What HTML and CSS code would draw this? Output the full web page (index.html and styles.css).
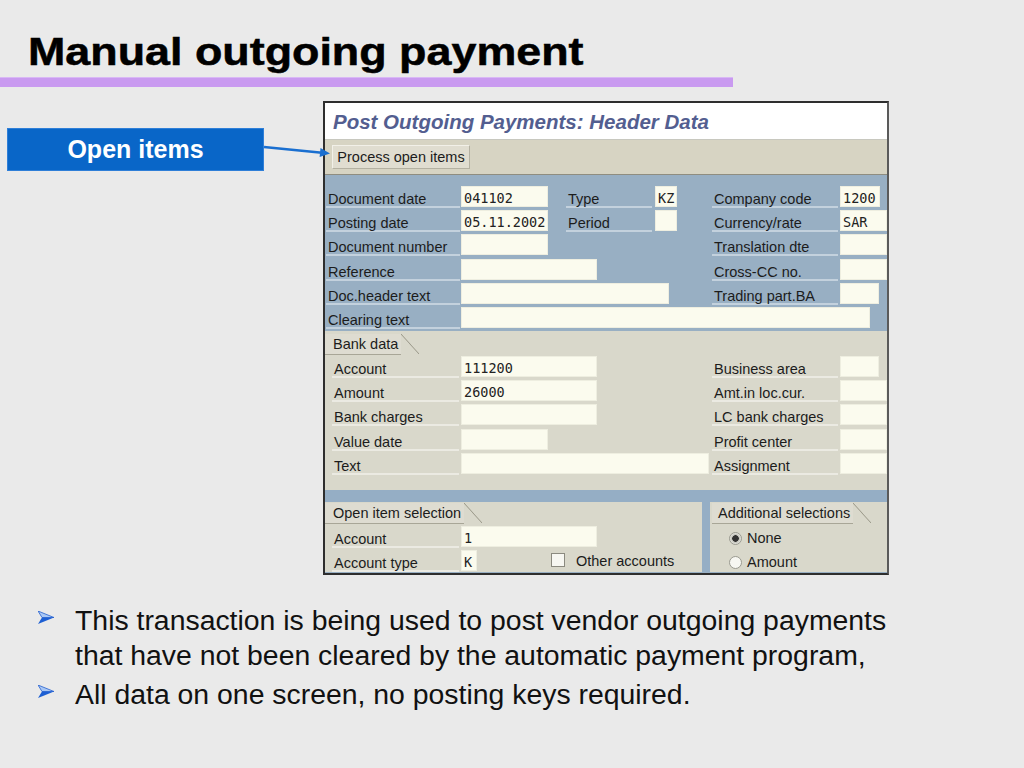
FILE: index.html
```html
<!DOCTYPE html>
<html lang="en">

<head>
    <meta charset="UTF-8">
    <meta name="viewport" content="width=device-width, initial-scale=1.0">
    <title>Manual outgoing payment</title>
    <link rel="stylesheet" href="styles.css">
</head>

<body>

    <!-- Slide title -->
    <header class="slide-head">
        <h1><span>Manual outgoing payment</span></h1>
        <div class="rule"></div>
    </header>

    <main class="stage">
        <div class="callout">Open items</div>

        <svg class="pointer" width="72" height="20" viewBox="0 0 72 20">
            <line x1="2" y1="6" x2="60" y2="11.7" stroke="#1a6fd0" stroke-width="2.5" />
            <polygon points="68,12.5 57.6,16 58.5,7" fill="#1a6fd0" />
        </svg>

        <!-- SAP screen -->
        <div class="sap">
            <div class="sap-title">Post Outgoing Payments: Header Data</div>
            <div class="sap-toolbar">
                <button class="sap-btn">Process open items</button>
            </div>

            <div class="sec-blue">
                <div class="row">
                    <div class="lbl">Document date</div>
                    <div class="fld fld-date">041102</div>
                    <div class="mid">
                        <div class="lbl lbl-mid">Type</div>
                        <div class="fld fld-tiny">KZ</div>
                    </div>
                    <div class="rgrp">
                        <div class="lbl">Company code</div>
                        <div class="fld fld-cc">1200</div>
                    </div>
                </div>
                <div class="row">
                    <div class="lbl">Posting date</div>
                    <div class="fld fld-date">05.11.2002</div>
                    <div class="mid">
                        <div class="lbl lbl-mid">Period</div>
                        <div class="fld fld-tiny"></div>
                    </div>
                    <div class="rgrp">
                        <div class="lbl">Currency/rate</div>
                        <div class="fld fld-end">SAR</div>
                    </div>
                </div>
                <div class="row">
                    <div class="lbl">Document number</div>
                    <div class="fld fld-date"></div>
                    <div class="rgrp">
                        <div class="lbl">Translation dte</div>
                        <div class="fld fld-end"></div>
                    </div>
                </div>
                <div class="row">
                    <div class="lbl">Reference</div>
                    <div class="fld fld-mid"></div>
                    <div class="rgrp">
                        <div class="lbl">Cross-CC no.</div>
                        <div class="fld fld-end"></div>
                    </div>
                </div>
                <div class="row">
                    <div class="lbl">Doc.header text</div>
                    <div class="fld fld-hdr"></div>
                    <div class="rgrp">
                        <div class="lbl">Trading part.BA</div>
                        <div class="fld fld-ba"></div>
                    </div>
                </div>
                <div class="row">
                    <div class="lbl">Clearing text</div>
                    <div class="fld fld-clear"></div>
                </div>
            </div>

            <div class="sec-beige bank">
                <div class="tab">Bank data</div>
                <div class="row">
                    <div class="lbl">Account</div>
                    <div class="fld fld-mid">111200</div>
                    <div class="rgrp">
                        <div class="lbl">Business area</div>
                        <div class="fld fld-ba"></div>
                    </div>
                </div>
                <div class="row">
                    <div class="lbl">Amount</div>
                    <div class="fld fld-mid">26000</div>
                    <div class="rgrp">
                        <div class="lbl">Amt.in loc.cur.</div>
                        <div class="fld fld-end"></div>
                    </div>
                </div>
                <div class="row">
                    <div class="lbl">Bank charges</div>
                    <div class="fld fld-mid"></div>
                    <div class="rgrp">
                        <div class="lbl">LC bank charges</div>
                        <div class="fld fld-end"></div>
                    </div>
                </div>
                <div class="row">
                    <div class="lbl">Value date</div>
                    <div class="fld fld-date"></div>
                    <div class="rgrp">
                        <div class="lbl">Profit center</div>
                        <div class="fld fld-end"></div>
                    </div>
                </div>
                <div class="row">
                    <div class="lbl">Text</div>
                    <div class="fld fld-text"></div>
                    <div class="rgrp">
                        <div class="lbl">Assignment</div>
                        <div class="fld fld-end"></div>
                    </div>
                </div>
            </div>

            <div class="band"></div>

            <div class="sap-bottom">
                <div class="sec-beige box-open">
                    <div class="tab">Open item selection</div>
                    <div class="row">
                        <div class="lbl">Account</div>
                        <div class="fld fld-mid">1</div>
                    </div>
                    <div class="row">
                        <div class="lbl">Account type</div>
                        <div class="fld fld-k">K</div>
                        <span class="check"></span>
                        <span class="opt-text">Other accounts</span>
                    </div>
                </div>
                <div class="sec-beige box-add">
                    <div class="tab">Additional selections</div>
                    <div class="radio-row">
                        <span class="radio on"></span>
                        <span class="opt-text">None</span>
                    </div>
                    <div class="radio-row">
                        <span class="radio"></span>
                        <span class="opt-text">Amount</span>
                    </div>
                </div>
            </div>
        </div>
    </main>

    <ul class="bullets">
        <li>
            <svg class="marker" width="16" height="13" viewBox="0 0 16 13">
                <polygon points="0,0 16,6.5 4,6.5" fill="#a9c7f4" stroke="#2560cf" stroke-width="0.8" />
                <polygon points="4,6.5 16,6.5 0,13" fill="#1d5fd3" />
            </svg>
            <span>This transaction is being used to post vendor outgoing payments that have not been cleared by the
                automatic payment program,</span>
        </li>
        <li>
            <svg class="marker" width="16" height="13" viewBox="0 0 16 13">
                <polygon points="0,0 16,6.5 4,6.5" fill="#a9c7f4" stroke="#2560cf" stroke-width="0.8" />
                <polygon points="4,6.5 16,6.5 0,13" fill="#1d5fd3" />
            </svg>
            <span>All data on one screen, no posting keys required.</span>
        </li>
    </ul>

</body>

</html>
```

FILE: styles.css
```css
body {
    margin: 0;
    background-color: #eaeaea;
    font-family: "Liberation Sans", Arial, sans-serif;
    color: #111;
    overflow: hidden;
}

/* title */
.slide-head {
    padding-top: 33px;
}

h1 {
    margin: 0;
    padding-left: 28px;
    font-size: 38px;
    line-height: 38px;
    font-weight: bold;
    color: #000;
}

h1 span {
    display: inline-block;
    transform: scaleX(1.18);
    transform-origin: left center;
    -webkit-text-stroke: 0.5px #000;
}

.rule {
    margin-top: 6px;
    width: 733px;
    height: 10px;
    background: #c99af0;
    border-top: 1px solid #d9b8f5;
    box-sizing: border-box;
}

/* stage with callout + screen */
.stage {
    position: relative;
    display: flex;
    margin-top: 14px;
}

.callout {
    flex: none;
    margin: 27px 0 0 7px;
    width: 257px;
    height: 43px;
    box-sizing: border-box;
    background: #0966c8;
    border: 1px solid #2f7fd8;
    color: #fff;
    font-weight: bold;
    font-size: 25px;
    line-height: 41px;
    text-align: center;
}

.pointer {
    position: absolute;
    left: 262px;
    top: 40px;
}

/* SAP screen */
.sap {
    flex: none;
    margin-left: 59px;
    width: 566px;
    height: 474px;
    box-sizing: border-box;
    border: 2px solid #2e2e2e;
    border-right-color: #5a5a5a;
    background: #98afc3;
    overflow: hidden;
    font-size: 14.5px;
    color: #1c1c1c;
}

.sap-title {
    height: 36px;
    background: #fff;
    border-bottom: 1px solid #c8c8bf;
    padding-left: 8px;
    font-size: 20.5px;
    font-weight: bold;
    font-style: italic;
    color: #535e90;
    line-height: 38px;
}

.sap-toolbar {
    height: 35px;
    background: #d7d4c3;
    border-bottom: 1px solid #8f8d80;
    box-sizing: border-box;
    padding: 5px 0 0 7px;
}

.sap-btn {
    width: 138px;
    height: 24px;
    padding: 0;
    background: #e0ddd0;
    border: 1px solid #b4b1a2;
    border-top-color: #f2f0e8;
    border-left-color: #f2f0e8;
    font-family: "Liberation Sans", Arial, sans-serif;
    font-size: 14.5px;
    color: #1c1c1c;
}

.sec-blue {
    height: 156px;
    padding-top: 11px;
    box-sizing: border-box;
    background: #98afc3;
}

.sec-beige {
    background: #d9d8cb;
}

.row {
    display: flex;
    height: 22px;
    margin-bottom: 2.2px;
}

.lbl {
    flex: none;
    box-sizing: border-box;
    height: 22px;
    padding: 3px 0 0 2px;
    line-height: 20px;
    white-space: nowrap;
    border-bottom: 2px solid #c3d1dd;
}

.fld {
    flex: none;
    box-sizing: border-box;
    height: 21px;
    background: #fbfbee;
    border: 1px solid #eeeee0;
    padding: 2px 0 0 2px;
    font-family: "DejaVu Sans Mono", monospace;
    font-size: 13.5px;
    line-height: 19px;
    color: #222;
}

.sec-blue .row {
    padding-left: 1px;
}

.sec-blue .row > .lbl {
    width: 134px;
}

.sec-blue .row > .fld {
    margin-left: 1px;
}

.sec-beige .row {
    padding-left: 7px;
}

.sec-beige .lbl {
    border-bottom-color: #ebeae2;
}

.sec-beige .row > .lbl {
    width: 127px;
}

.sec-beige .row > .fld {
    margin-left: 2px;
}

.mid {
    display: flex;
    margin-left: 18px;
}

.lbl-mid {
    width: 86px;
}

.mid .fld {
    margin-left: 3px;
}

.rgrp {
    display: flex;
    margin-left: auto;
    width: 175px;
}

.rgrp .lbl {
    width: 126px;
}

.rgrp .fld {
    margin-left: 2px;
}

.fld-date { width: 87px; }
.fld-mid { width: 136px; }
.fld-hdr { width: 208px; }
.fld-clear { width: 409px; }
.fld-text { width: 248px; }
.fld-tiny { width: 22px; }
.fld-k { width: 16px; }
.fld-cc { width: 40px; }
.fld-ba { width: 39px; }
.fld-end { width: 47px; }

/* tabs with slanted edge */
.tab {
    position: relative;
    display: block;
    width: max-content;
    height: 21px;
    box-sizing: border-box;
    padding: 0 3px 0 8px;
    line-height: 21px;
    white-space: nowrap;
    border-bottom: 1px solid #a8a697;
    background: #dedcd1;
}

.tab::after {
    content: "";
    position: absolute;
    right: -18px;
    top: 0;
    width: 18px;
    height: 20px;
    background: linear-gradient(to top right, transparent calc(50% - 0.8px), #9c9a8b 50%, transparent calc(50% + 0.8px));
}

.bank {
    height: 159px;
    padding-top: 3px;
    box-sizing: border-box;
}

.bank .tab {
    margin-bottom: 1px;
}

.band {
    height: 12px;
    background: #95aec5;
}

.sap-bottom {
    display: flex;
    height: 70px;
    background: #95aec5;
}

.box-open {
    width: 377px;
    padding-top: 1px;
    box-sizing: border-box;
}

.box-open .tab {
    margin-bottom: 2px;
}

.box-add {
    margin-left: 8px;
    width: 177px;
    padding-top: 1px;
    box-sizing: border-box;
}

.box-add .tab {
    margin-left: 2px;
    padding-left: 6px;
    margin-bottom: 2px;
}

.check {
    flex: none;
    width: 14px;
    height: 14px;
    box-sizing: border-box;
    margin: 3px 0 0 74px;
    background: #f7f7f2;
    border: 1px solid #8b8a80;
}

.opt-text {
    margin-left: 11px;
    line-height: 22px;
}

.radio-row {
    display: flex;
    align-items: center;
    height: 24.2px;
    padding-left: 19px;
}

.radio {
    width: 13px;
    height: 13px;
    box-sizing: border-box;
    border-radius: 50%;
    border: 1px solid #9a9a90;
    background: #f7f7f2;
}

.radio.on {
    background: radial-gradient(circle, #333 0 3px, #bdbdb5 3.5px, #f0f0ea 6px);
}

.radio-row .opt-text {
    margin-left: 5px;
}

/* bullets */
.bullets {
    list-style: none;
    margin: 28px 0 0;
    padding: 0;
    font-size: 28.4px;
    line-height: 35px;
    color: #111;
}

.bullets li {
    display: flex;
    align-items: flex-start;
    margin-bottom: 4px;
}

.marker {
    flex: none;
    margin: 8px 0 0 38px;
}

.bullets li span {
    margin-left: 21px;
    width: 830px;
}
```
